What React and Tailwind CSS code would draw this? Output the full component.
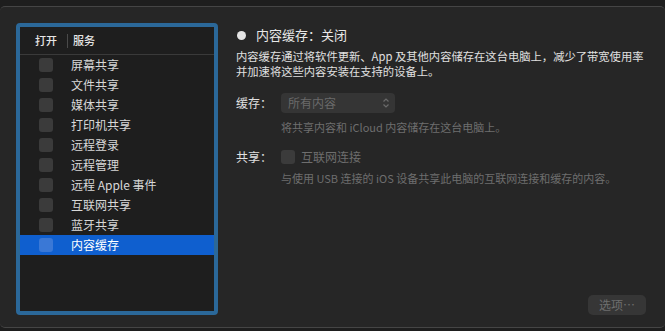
const services = [
  '屏幕共享',
  '文件共享',
  '媒体共享',
  '打印机共享',
  '远程登录',
  '远程管理',
  '远程 Apple 事件',
  '互联网共享',
  '蓝牙共享',
  '内容缓存',
];

const font = { fontFamily: '"Noto Sans CJK SC", "Noto Sans", sans-serif' };

function Check({ selected }) {
  return (
    <span
      className={`block w-[14px] h-[14px] rounded-[3px] ${selected ? 'bg-[#3a78d6]' : 'bg-[#3b3b3b]'}`}
    />
  );
}

export default function App() {
  const selected = 9;
  return (
    <div className="w-[665px] h-[331px] bg-[#1e1e1e] pt-[6px] overflow-hidden text-[#dcdcdc]" style={font}>
      <div className="h-[322px] bg-[#262626] border-y border-[#454545] rounded-[5px] flex pl-4 pt-4 pr-[19px] pb-3">
        {/* service list */}
        <div className="w-[202px] h-[292px] border-4 border-[#2b6899] rounded-[4px] bg-[#1e1e1e] flex flex-col">
          <div className="h-[28px] flex items-center border-b border-[#3a3a3a] text-[11px] font-medium text-[#e6e6e6]">
            <span className="w-[47px] pl-[15px]">打开</span>
            <span className="w-px h-[14px] bg-[#4a4a4a]" />
            <span className="pl-[5px]">服务</span>
          </div>
          {services.map((s, i) => (
            <div
              key={s}
              className={`h-5 flex items-center text-[12px] ${i === selected ? 'bg-[#0f5fcf] text-white' : 'text-[#d8d8d8]'}`}
            >
              <span className="w-[51px] pl-[19px]">
                <Check selected={i === selected} />
              </span>
              <span className="leading-none">{s}</span>
            </div>
          ))}
        </div>

        {/* detail pane */}
        <div className="flex-1 pl-[18px] flex flex-col">
          <div className="flex items-center mt-[2px] h-5">
            <span className="w-[9px] h-[9px] rounded-full bg-[#e4e4e4] ml-[1px]" />
            <span className="ml-[10px] text-[13px] text-[#e8e8e8]">内容缓存：关闭</span>
          </div>
          <p className="mt-[4px] text-[11.3px] leading-[15px] text-[#e0e0e0] whitespace-nowrap">
            内容缓存通过将软件更新、App 及其他内容储存在这台电脑上，减少了带宽使用率
            <br />
            并加速将这些内容安装在支持的设备上。
          </p>

          <div className="flex items-center mt-[14px]">
            <span className="w-[45px] text-[12px] text-[#e0e0e0]">缓存：</span>
            <div className="w-[114px] h-5 rounded-[4px] bg-[#353535] flex items-center justify-between pl-[7px] pr-[5px]">
              <span className="text-[12px] text-[#6a6a6a]">所有内容</span>
              <svg width="8" height="12" viewBox="0 0 8 12" fill="none" stroke="#6a6a6a" strokeWidth="1.2">
                <path d="M1.5 4.5 L4 2 L6.5 4.5" />
                <path d="M1.5 7.5 L4 10 L6.5 7.5" />
              </svg>
            </div>
          </div>
          <p className="ml-[45px] mt-[6px] text-[11px] text-[#6e6e6e] whitespace-nowrap">将共享内容和 iCloud 内容储存在这台电脑上。</p>

          <div className="flex items-center mt-[12px]">
            <span className="w-[45px] text-[12px] text-[#e0e0e0]">共享：</span>
            <Check />
            <span className="ml-[6px] text-[12px] text-[#6e6e6e]">互联网连接</span>
          </div>
          <p className="ml-[45px] mt-[4px] text-[11px] text-[#6e6e6e] whitespace-nowrap">与使用 USB 连接的 iOS 设备共享此电脑的互联网连接和缓存的内容。</p>

          <div className="mt-auto flex justify-end">
            <button className="w-[58px] h-5 rounded-[5px] bg-[#363636] text-[12px] text-[#6e6e6e]">选项…</button>
          </div>
        </div>
      </div>
    </div>
  );
}
